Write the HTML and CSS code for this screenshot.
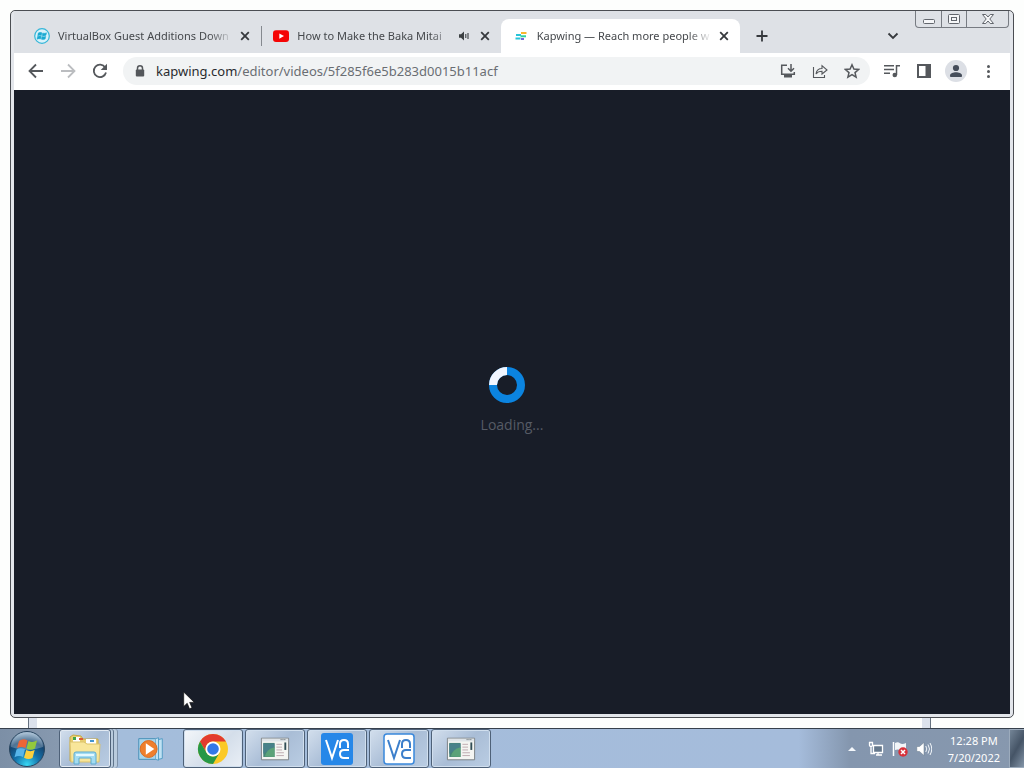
FILE: index.html
```html
<!DOCTYPE html>
<html lang="en">
<head>
<meta charset="utf-8">
<title>Kapwing — Reach more people</title>
<link rel="stylesheet" href="styles.css">
</head>
<body>
<main class="desktop">
  <section class="window">
    <header class="tabstrip">
      <div class="tabs">
        <div class="tab">
          <svg class="favicon" viewBox="0 0 16 16"><circle cx="8" cy="8" r="7.3" fill="#d9f2fa" stroke="#35b6d8" stroke-width="1.2"/><path d="M4.2 5Q6 3.8 8 4.8L7.4 7.5Q5.5 6.8 3.7 7.7zM8.7 5Q10.5 5.7 12.6 4.7L12 7.3Q10 8.3 8.1 7.6zM3.5 8.4Q5.3 7.5 7.2 8.3L6.6 11Q4.8 10.3 3 11.2zM7.9 8.5Q9.8 9.2 11.8 8.2L11.2 11Q9.2 12 7.3 11.2z" fill="#19a9d2" stroke="#19a9d2" stroke-width=".4"/></svg>
          <span class="title">VirtualBox Guest Additions Down</span>
          <button class="close" aria-label="Close tab"><svg viewBox="0 0 10 10"><path d="M1.2 1.2l7.6 7.6M8.8 1.2L1.2 8.8"/></svg></button>
        </div>
        <div class="tab divided">
          <svg class="favicon" viewBox="0 0 16 16"><rect y="2.3" width="16" height="11.6" rx="3" fill="#f50505"/><path d="M6.3 5.4v5.3l4.7-2.6z" fill="#fff"/></svg>
          <span class="title">How to Make the Baka Mitai</span>
          <svg class="sound" viewBox="0 0 10 10"><path d="M0 3.3h2L5 .6v8.800L2 6.700H0z" fill="#3c4043"/><path d="M6.800 3v4M9 2v6" stroke="#3c4043" stroke-width="1.100"/></svg>
          <button class="close" aria-label="Close tab"><svg viewBox="0 0 10 10"><path d="M1.2 1.2l7.6 7.6M8.8 1.2L1.2 8.8"/></svg></button>
        </div>
        <div class="tab active">
          <svg class="favicon" viewBox="0 0 16 16"><path d="M8 5h5.500" stroke="#f8b62d" stroke-width="2"/><path d="M3 7h5M2.500 10.500h5" stroke="#27c4d9" stroke-width="2"/><path d="M7.500 8.300h5.500" stroke="#2fd0a0" stroke-width="2"/><path d="M8 11h3" stroke="#7666d8" stroke-width="2"/></svg>
          <span class="title">Kapwing — Reach more people w</span>
          <button class="close" aria-label="Close tab"><svg viewBox="0 0 10 10"><path d="M1.2 1.2l7.6 7.6M8.8 1.2L1.2 8.8"/></svg></button>
        </div>
      </div>
      <button class="newtab" aria-label="New tab"><svg viewBox="0 0 12 12"><path d="M6 .5v11M.5 6h11"/></svg></button>
      <button class="search-tabs" aria-label="Search tabs"><svg viewBox="0 0 12 12"><path d="M1.500 3.500L6 8l4.500-4.500"/></svg></button>
      <div class="controls">
        <button aria-label="Minimize"><svg viewBox="0 0 14 12"><rect x="1.500" y="6.500" width="11" height="4" rx="1"/></svg></button>
        <button aria-label="Restore"><svg viewBox="0 0 14 12"><rect x="1.500" y="1.500" width="11" height="9" rx="1"/><rect x="4.500" y="4.500" width="5" height="3"/></svg></button>
        <button class="wide" aria-label="Close"><svg viewBox="0 0 14 12"><path d="M1.500 1.500h3.300L7 4l2.200-2.500h3.300L8.800 6l3.700 4.500H9.200L7 8l-2.200 2.500H1.500L5.200 6z"/></svg></button>
      </div>
    </header>
    <nav class="toolbar">
      <button class="tool" aria-label="Back"><svg viewBox="0 0 16 16"><path class="s" d="M15 8H2M8 1.500L1.500 8 8 14.500"/></svg></button>
      <button class="tool dim" aria-label="Forward"><svg viewBox="0 0 16 16"><path class="s" d="M1 8h13M8 1.500L14.500 8 8 14.500"/></svg></button>
      <button class="tool" aria-label="Reload"><svg viewBox="0 0 16 16"><path class="s" d="M13.200 4.500A6.200 6.200 0 1 0 14 9.500"/><path class="f" d="M15 .8v6.300H8.700z"/></svg></button>
      <div class="omnibox">
        <svg class="lock" viewBox="0 0 10 12"><path d="M2.500 5V3.300a2.500 2.500 0 0 1 5 0V5" fill="none" stroke="#54575b" stroke-width="1.500"/><rect x=".8" y="4.500" width="8.400" height="7" rx="1" fill="#54575b"/></svg>
        <a class="url" href="#"><b>kapwing.com</b>/editor/videos/5f285f6e5b283d0015b11acf</a>
        <button class="tool" aria-label="Install"><svg viewBox="0 0 16 16"><path class="t" d="M7 2.200H1.700v9h12.600V9"/><path class="t" d="M11 1v7M8 5.300l3 3 3-3"/><path class="f" d="M4 12h8v2.500H4z"/></svg></button>
        <button class="tool" aria-label="Share"><svg viewBox="0 0 16 16"><path class="n" d="M1.500 4v10.500h11V12M4 11c.5-3.500 2.500-5.500 6-5.500V2.700L15 7l-5 4V8.300c-2.700 0-4.500.7-6 2.700z"/></svg></button>
        <button class="tool" aria-label="Bookmark"><svg viewBox="0 0 16 16"><path class="n2" d="M8 1.800l1.900 4.300 4.700.4-3.600 3.100 1.100 4.600L8 11.700l-4.100 2.500L5 9.600 1.400 6.500l4.700-.4z"/></svg></button>
      </div>
      <button class="tool" aria-label="Media"><svg viewBox="0 0 16 16"><path class="t" d="M0 2.700h10M0 6.500h10M0 10.300h6M12.500 12V2.700H16"/><circle class="f" cx="10.800" cy="12" r="2.300"/></svg></button>
      <button class="tool" aria-label="Side panel"><svg viewBox="0 0 16 16"><path class="f" fill-rule="evenodd" d="M1 1h14v14H1zM3 3v10h6.500V3z"/></svg></button>
      <button class="tool profile" aria-label="Profile"><svg viewBox="0 0 16 16"><circle cx="8" cy="5" r="3.100"/><path d="M2 14v-1.500c0-2 3.500-3.200 6-3.200s6 1.200 6 3.200V14z"/></svg></button>
      <button class="tool" aria-label="Menu"><svg viewBox="0 0 16 16"><circle class="f" cx="8.500" cy="3.500" r="1.500"/><circle class="f" cx="8.500" cy="8.500" r="1.500"/><circle class="f" cx="8.500" cy="13.500" r="1.500"/></svg></button>
    </nav>
    <div class="page">
      <svg class="spinner" viewBox="0 0 36 36"><circle cx="18" cy="18" r="14" fill="none" stroke="#0b84e0" stroke-width="8"/><path d="M4 18A14 14 0 0 1 18 4" fill="none" stroke="#f1f6ff" stroke-width="8"/></svg>
      <p class="loading">Loading...</p>
    </div>
  </section>
  <div class="behind"></div>
  <svg class="cursor" viewBox="0 0 12 19"><path d="M.7 1v14.500l3.500-3.200 2.300 5.500 2.500-1-2.300-5.400h4.600z" fill="#fff" stroke="#111" stroke-width=".7"/></svg>
</main>
<footer class="taskbar">
  <button class="start" aria-label="Start"><svg viewBox="0 0 38 38">
    <defs><radialGradient id="orb" cx=".5" cy=".95" r=".9"><stop offset="0" stop-color="#38d8f4"/><stop offset=".4" stop-color="#1472ab"/><stop offset=".75" stop-color="#15446f"/><stop offset="1" stop-color="#8aa9c4"/></radialGradient></defs>
    <circle cx="19" cy="19" r="17.500" fill="url(#orb)" stroke="#28445e"/><path d="M3 17a16 15 0 0 1 32 0Q19 23 3 17z" fill="#fff" opacity=".25"/>
    <path d="M11 11q4-3 8.500-.5L17.500 18q-4-2-8.500 0z" fill="#ec6536"/><path d="M20.500 11q4 2 8.500-.5L27 18.500q-4 2.500-8.500 0z" fill="#93c83d"/><path d="M8.500 19.500q4-2.500 8.500-.2L15 27q-4-2-8.500.3z" fill="#58b5e9"/><path d="M18.200 20q4 2.300 8.500 0L24.500 28q-4 2.200-8.500-.2z" fill="#fccf3d"/></svg></button>
  <button class="task stack" aria-label="File Explorer"><svg viewBox="0 0 34 32">
    <path d="M2 4l3-2 8 1 2 3h15v22H2z" fill="#e9cf71" stroke="#c5a949"/><path d="M5 4h7v5H5zM18 6h10v5H18z" fill="#fff"/><path d="M5 4h3v3H5z" fill="#3fa34b"/><path d="M11 5h4v2h-4z" fill="#dc5b35"/><path d="M22 7h4v2h-4z" fill="#4495cf"/><path d="M2 9h14l3 2h13l-1 18H3z" fill="#f8e69a" stroke="#dbc36c"/><path d="M6 31V21q0-2 2-2h18q2 0 2 2v10h-5v-6H11v6z" fill="#a3dcf1" stroke="#5caad0"/><path d="M8 22h18" stroke="#e4f9ff" stroke-width="2"/></svg></button>
  <button class="task flat" aria-label="Media Player"><svg viewBox="0 0 34 32"><path d="M4 5h18v22H4z" fill="#a8d5ec" stroke="#458eb5"/><path d="M22 5l3-1v24l-3-1M25 6l4-1v21l-4 1" fill="#c0e2f3" stroke="#509bc3"/><circle cx="14.500" cy="16" r="9" fill="#ee7f2d" stroke="#d76b20"/><path d="M11.500 10v12l9-6z" fill="#fff"/></svg></button>
  <button class="task current" aria-label="Chrome"><svg viewBox="0 0 32 32"><circle cx="16" cy="16" r="15" fill="#fbc926"/><path d="M3 8.500A15 15 0 0 1 29 8.500H16a7.500 7.500 0 0 0-6.500 11.300z" fill="#e33b2e"/><path d="M3 8.500l6.500 11.300A7.500 7.500 0 0 0 22.500 19.800L16 31A15 15 0 0 1 3 8.500z" fill="#279847"/><circle cx="16" cy="16" r="7.500" fill="#fff"/><circle cx="16" cy="16" r="5.800" fill="#3378e8"/></svg></button>
  <button class="task app" aria-label="Application"><svg viewBox="0 0 32 32"><g id="app"><path d="M1.500 4.500h29v23h-29z" fill="#f4f5f2" stroke="#777d80"/><path d="M2 5h28v3H2z" fill="#dfe4e8"/><path d="M22 6h6" stroke="#4e555a" stroke-dasharray="1 1"/><path d="M3.500 9.500h12v15h-12z" fill="#468477"/><path d="M3.500 10h12v5Q9 17 3.500 21z" fill="#478089"/><path d="M5 24q2-8 10.500-10v10.500z" fill="#5ba278"/><path d="M17.500 11h6m-6 3h6m-6 3h6m-6 3h8m-8 3h8" stroke="#bda9ae"/><path d="M27 9v8" stroke="#304d55" stroke-width="2"/></g></svg></button>
  <button class="task" aria-label="VNC Server"><svg viewBox="0 0 32 32"><rect width="32" height="32" rx="3" fill="#2687e8"/><path d="M5 7l6 18 6-18M19 15v-4q0-4 4-4t4 4v4M28 17h-5q-4 0-4 4t4 4h5" fill="none" stroke="#fff" stroke-width="2"/></svg></button>
  <button class="task" aria-label="VNC Viewer"><svg viewBox="0 0 32 32"><rect x="1" y="1" width="30" height="30" rx="3" fill="#fff" stroke="#3988dc" stroke-width="1.500"/><path d="M5 7l6 18 6-18M19 15v-4q0-4 4-4t4 4v4M28 17h-5q-4 0-4 4t4 4h5" fill="none" stroke="#3c7fcb" stroke-width="2"/></svg></button>
  <button class="task app" aria-label="Application"><svg viewBox="0 0 32 32"><use href="#app"/></svg></button>
  <div class="tray">
    <svg class="up" viewBox="0 0 8 4"><path d="M4 0l4 4H0z" fill="#f4f8fc"/></svg>
    <svg viewBox="0 0 16 16"><path d="M5.500 4.500h9v7h-9zM8 14h6M10 12v2" fill="#65788c" stroke="#fff" stroke-width="1.300"/><path d="M1.500 1v3q0 1.500 1.500 1.500T4.500 4V1M1 1.500h4M3 6v6.500h4" fill="none" stroke="#fff" stroke-width="1.300"/></svg>
    <svg viewBox="0 0 16 16"><path d="M1.500 1v14" stroke="#fff" stroke-width="1.500"/><path d="M3 2q3-1.500 5 .2T14 2v7q-3 1.500-5.500.2T3 9z" fill="#f2f5f8"/><circle cx="11" cy="11" r="4.700" fill="#d8313a"/><path d="M9 9l4 4m0-4l-4 4" stroke="#fff" stroke-width="1.500"/></svg>
    <svg viewBox="0 0 16 16"><path d="M.8 5.500h2.700L8 1.500v13L3.500 10.500H.8z" fill="#fff" stroke="#66788b" stroke-width=".5"/><path d="M9.800 5q2 3 0 6M12 3.500q3 4.500 0 9M14 2q3.500 6 0 12" fill="none" stroke="#f2f6fa"/></svg>
    <time class="clock"><span>12:28 PM</span><span>7/20/2022</span></time>
    <button class="peek" aria-label="Show desktop"></button>
  </div>
</footer>
</body>
</html>
```
FILE: styles.css
```css
* { box-sizing: border-box; }
body {
  margin: 0;
  height: 100vh;
  display: flex;
  flex-direction: column;
  overflow: hidden;
  background: #fdfefd;
  font: 11px/16px "Noto Sans", "Open Sans", sans-serif;
  color: #45484c;
}
button { border: 0; padding: 0; background: none; font: inherit; display: flex; align-items: center; justify-content: center; }
svg { display: block; flex: none; }
.desktop { flex: 1; min-height: 0; display: flex; flex-direction: column; position: relative; padding-top: 10px; }
.window {
  flex: 1;
  min-height: 0;
  display: flex;
  flex-direction: column;
  margin: 0 10px;
  padding: 0 3px 3px;
  background: #e3e6eb;
  border: 1px solid #4b4e53;
  border-radius: 5px;
}
.tabstrip { display: flex; height: 42px; background: #dee1e6; padding-top: 8px; flex: none; }
.tabs { display: flex; flex: 0 1 726px; min-width: 0; padding-left: 8px; }
.tab { flex: 1; min-width: 0; display: flex; align-items: center; padding: 0 10px 0 12px; }
.tab.active { background: #fff; border-radius: 8px 8px 0 0; }
.tab.divided { background: linear-gradient(#85898f, #85898f) 0 7px / 1px 20px no-repeat; }
.favicon { width: 16px; height: 16px; margin-right: 8px; }
.title {
  flex: 1;
  white-space: nowrap;
  overflow: hidden;
  -webkit-mask-image: linear-gradient(to left, transparent, #000 24px);
  mask-image: linear-gradient(to left, transparent, #000 24px);
}
.sound { width: 10px; height: 10px; margin: 0 4px 0 5px; }
.close { width: 12px; height: 16px; margin-left: 6px; }
.close svg { width: 10px; height: 10px; }
.close path, .newtab path, .search-tabs path { fill: none; stroke: #36393d; stroke-width: 1.8; }
.newtab { width: 44px; }
.newtab svg, .search-tabs svg { width: 12px; height: 12px; }
.search-tabs { width: 40px; margin-left: auto; }
.controls {
  display: flex;
  height: 17px;
  margin: -8px 1px 0 2px;
  border: 1px solid #777b82;
  border-top: 0;
  border-radius: 0 0 4px 4px;
}
.controls button { width: 25px; }
.controls button + button { border-left: 1px solid #777b82; }
.controls .wide { width: 42px; }
.controls svg { width: 14px; height: 12px; fill: #f5f6f8; stroke: #62666d; }
.toolbar { display: flex; align-items: center; height: 37px; padding: 0 6px 2px; background: #fff; flex: none; }
.tool { width: 32px; height: 28px; flex: none; }
.tool svg { width: 16px; height: 16px; }
.s, .t, .n, .n2 { fill: none; stroke: #55585c; stroke-width: 1.8; }
.t, .n2 { stroke-width: 1.5; }
.n { stroke-width: 1.1; }
.f { fill: #55585c; }
.dim .s { stroke: #bbbdc0; }
.omnibox { flex: 1; min-width: 0; display: flex; align-items: center; height: 28px; margin: 0 6px 0 7px; padding: 0 2px 0 12px; border-radius: 14px; background: #f1f3f4; }
.lock { width: 10px; height: 12px; margin-right: 11px; }
.url { flex: 1; font-size: 13px; line-height: 18px; color: #6a6e73; text-decoration: none; white-space: nowrap; overflow: hidden; }
.url b { font-weight: 400; color: #292b2f; }
.profile svg { width: 22px; height: 22px; padding: 3px; border-radius: 50%; background: #dcdfe5; fill: #454d5a; }
.page { flex: 1; display: flex; flex-direction: column; align-items: center; justify-content: center; background: #181d28; }
.spinner { width: 36px; height: 36px; margin-right: 10px; }
.loading { margin: 12px 0 2px; font-family: "Open Sans", "Noto Sans", sans-serif; font-size: 14px; line-height: 20px; color: #565b65; }
.behind { flex: none; height: 10px; width: 88%; margin-left: 29px; border: solid #dce2ec; border-width: 0 8px; box-shadow: -1px 0 0 #65717f, 1px 0 0 #65717f; }
.cursor { position: absolute; left: 183px; top: 691px; width: 12px; height: 19px; }
.taskbar {
  flex: none;
  display: flex;
  gap: 2px;
  height: 40px;
  border-top: 1px solid #36404c;
  background: linear-gradient(90deg, #7c8fa6 0, #8799af 58px, #a4bddb 112px, #a5bcdb 78%, #8496ae 83%, #8798ae 100%);
}
.start { width: 57px; padding-right: 3px; }
.start svg { width: 38px; height: 38px; }
.task {
  width: 60px;
  border: 1px solid #4e6178;
  border-radius: 3px;
  background: linear-gradient(135deg, #d3dfed, #a9bdd6 50%, #bacde3);
  box-shadow: inset 0 0 0 1px #d1dfee;
}
.task svg { width: 32px; height: 32px; }
.stack { width: 52px; margin-right: 8px; box-shadow: inset 0 0 0 1px #e2eaf3, 2px 0 0 #b9cbdd, 3px 0 0 #60758c, 6px 0 0 #b9cbdd, 7px 0 0 #7e92aa; }
.stack svg { width: 34px; }
.flat { background: none; border-color: transparent; box-shadow: none; }
.current { background: linear-gradient(135deg, #f4f7fa, #d4deea 55%, #e9eff6); }
.app svg { width: 30px; height: 30px; }
.tray { display: flex; align-items: center; gap: 8px; margin-left: auto; color: #fff; }
.tray svg { width: 16px; height: 16px; }
.tray .up { width: 8px; height: 4px; margin-right: 4px; }
.clock { display: flex; flex-direction: column; align-items: center; margin-left: 8px; line-height: 17px; }
.peek { align-self: stretch; width: 15px; margin-left: 1px; border: 1px solid #9cabbc; border-right: 0; background: linear-gradient(120deg, #748597, #455466 50%, #8495a8); }
```
